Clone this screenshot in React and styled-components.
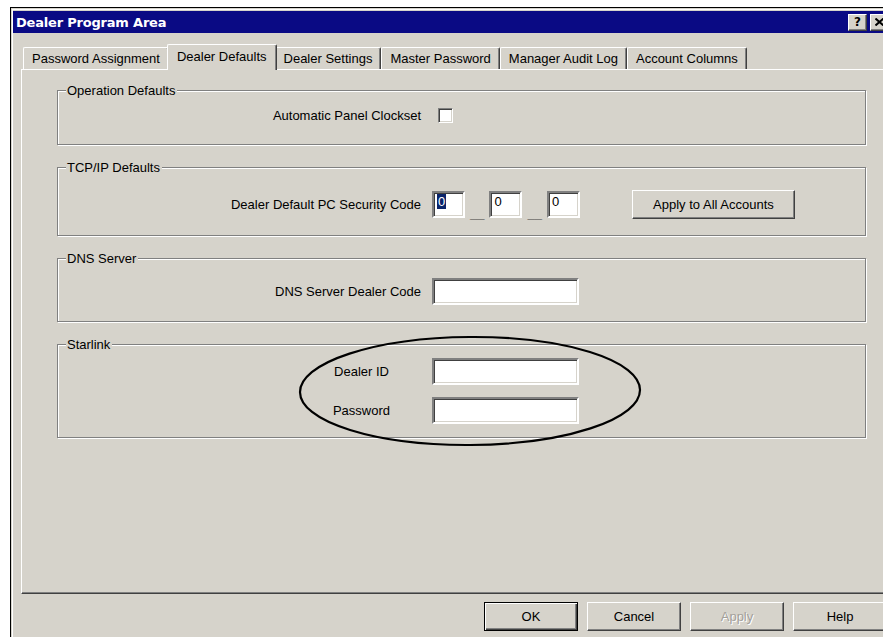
import React from "react";
import styled, { createGlobalStyle } from "styled-components";

const face = "#d6d3cb";

const GlobalStyle = createGlobalStyle`
  * { box-sizing: border-box; }
  html, body {
    margin: 0;
    padding: 0;
    background: #fff;
    overflow: hidden;
  }
  body {
    font-family: "Liberation Sans", Arial, sans-serif;
    font-size: 13px;
    color: #000;
  }
`;

const Window = styled.div`
  margin: 7px 0 0 10px;
  width: 890px;
  height: 640px;
  padding: 3px 0 0 2px;
  background: ${face};
  border-top: 1px solid #000;
  border-left: 1px solid #000;
  box-shadow: inset 1px 1px 0 ${face}, inset 2px 2px 0 #fff;
`;

const TitleBar = styled.div`
  display: flex;
  align-items: center;
  justify-content: space-between;
  height: 22px;
  margin-right: 7px;
  padding: 0 4px 0 3px;
  background: #0a0a84;
  color: #fff;
`;

const Title = styled.span`
  font-family: "DejaVu Sans", Verdana, sans-serif;
  font-weight: bold;
  font-size: 13px;
  letter-spacing: -0.2px;
`;

const CaptionButtons = styled.div`
  display: flex;
  gap: 3px;
`;

const CaptionButton = styled.div`
  display: flex;
  align-items: center;
  justify-content: center;
  width: 19px;
  height: 17px;
  background: ${face};
  color: #000;
  font-family: "DejaVu Sans", Verdana, sans-serif;
  font-weight: bold;
  font-size: 12px;
  border: 1px solid;
  border-color: #fff #404040 #404040 #fff;
  box-shadow: inset -1px -1px 0 #808080;
`;

const Body = styled.div`
  padding: 11px 5px 0 8px;
`;

const TabStrip = styled.div`
  display: flex;
  align-items: flex-end;
  height: 25px;
  padding-left: 2px;
  position: relative;
  z-index: 1;
`;

const Tab = styled.div`
  display: flex;
  align-items: center;
  height: ${(p) => (p.$active ? 26 : 22)}px;
  margin: ${(p) => (p.$active ? "0 -2px -1px" : "0")};
  padding: ${(p) => (p.$active ? "0 9px 3px 9px" : "0 8px 0 8px")};
  position: relative;
  z-index: ${(p) => (p.$active ? 2 : 1)};
  background: ${face};
  white-space: nowrap;
  border-top: 1px solid #fff;
  border-left: 1px solid #fff;
  border-right: 1px solid #404040;
  border-radius: 2px 2px 0 0;
  box-shadow: inset -1px 0 0 #808080;
`;

const Panel = styled.div`
  height: 525px;
  padding: 20px 28px 0 35px;
  border: 1px solid;
  border-color: #fff #404040 #404040 #fff;
  box-shadow: inset -1px -1px 0 #808080;
`;

const Groups = styled.div`
  display: flex;
  flex-direction: column;
  gap: 22px;
`;

const Group = styled.section`
  position: relative;
  height: ${(p) => p.$h}px;
  border: 1px solid #808080;
  box-shadow: 1px 1px 0 #fff, inset 1px 1px 0 #fff;
`;

const GroupTitle = styled.div`
  width: fit-content;
  margin: -8px 0 0 8px;
  padding: 0 2px 0 1px;
  line-height: 15px;
  background: ${face};
`;

const GroupBody = styled.div`
  display: flex;
  flex-direction: column;
  gap: ${(p) => p.$gap || 0}px;
  padding-top: ${(p) => p.$pt}px;
`;

const Row = styled.div`
  display: flex;
  align-items: center;
`;

const Label = styled.span`
  flex: none;
  width: 363px;
  text-align: right;
  white-space: nowrap;
`;

const CenterLabel = styled(Label)`
  padding-left: 244px;
  text-align: center;
`;

const Fields = styled.div`
  display: flex;
  align-items: center;
  margin-left: ${(p) => p.$ml ?? 11}px;
`;

const CheckBox = styled.div`
  width: 15px;
  height: 15px;
  background: #fff;
  border: 1px solid;
  border-color: #808080 #fff #fff #808080;
  box-shadow: inset 1px 1px 0 #404040, inset -1px -1px 0 ${face};
`;

const TextBox = styled.div`
  width: ${(p) => p.$w}px;
  height: 27px;
  padding: 1px 2px 0 3px;
  line-height: 15px;
  background: #fff;
  border: 2px solid;
  border-color: #808080 #fff #fff #808080;
  box-shadow: inset 1px 1px 0 #404040, inset -1px -1px 0 ${face};
`;

const Selected = styled.span`
  background: #0a246a;
  color: #fff;
  padding: 0 1px;
`;

const Sep = styled.span`
  align-self: flex-end;
  margin: 0 5px -2px;
  line-height: 15px;
  font-weight: bold;
  color: #3a3a3a;
`;

const Button = styled.div`
  display: flex;
  align-items: center;
  justify-content: center;
  flex: none;
  width: ${(p) => p.$w || 94}px;
  height: 29px;
  margin-left: ${(p) => p.$ml || 0}px;
  background: ${face};
  color: ${(p) => (p.$disabled ? "#a3a09a" : "#000")};
  text-shadow: ${(p) => (p.$disabled ? "1px 1px 0 #fff" : "none")};
  border: 1px solid;
  border-color: ${(p) =>
    p.$default ? "#000" : "#fff #404040 #404040 #fff"};
  box-shadow: ${(p) =>
    p.$default
      ? "inset 1px 1px 0 #fff, inset -1px -1px 0 #404040, inset -2px -2px 0 #808080"
      : "inset -1px -1px 0 #808080"};
`;

const ButtonRow = styled.div`
  display: flex;
  justify-content: flex-end;
  gap: 9px;
  margin-top: 8px;
  padding-right: 8px;
`;

const Circle = styled.svg`
  position: absolute;
  left: 239px;
  top: -13px;
  pointer-events: none;
`;

const tabs = [
  "Password Assignment",
  "Dealer Defaults",
  "Dealer Settings",
  "Master Password",
  "Manager Audit Log",
  "Account Columns",
];

export default function App() {
  return (
    <>
      <GlobalStyle />
      <Window>
        <TitleBar>
          <Title>Dealer Program Area</Title>
          <CaptionButtons>
            <CaptionButton>?</CaptionButton>
            <CaptionButton>
              <svg width="9" height="8" viewBox="0 0 9 8">
                <path
                  d="M0.5 0.5 L8.5 7.5 M8.5 0.5 L0.5 7.5"
                  stroke="#000"
                  strokeWidth="2"
                />
              </svg>
            </CaptionButton>
          </CaptionButtons>
        </TitleBar>

        <Body>
          <TabStrip>
            {tabs.map((t) => (
              <Tab key={t} $active={t === "Dealer Defaults"}>
                {t}
              </Tab>
            ))}
          </TabStrip>

          <Panel>
            <Groups>
              <Group $h={55}>
                <GroupTitle>Operation Defaults</GroupTitle>
                <GroupBody $pt={10}>
                  <Row>
                    <Label>Automatic Panel Clockset</Label>
                    <Fields $ml={17}>
                      <CheckBox />
                    </Fields>
                  </Row>
                </GroupBody>
              </Group>

              <Group $h={69}>
                <GroupTitle>TCP/IP Defaults</GroupTitle>
                <GroupBody $pt={15}>
                  <Row>
                    <Label>Dealer Default PC Security Code</Label>
                    <Fields>
                      <TextBox $w={33}>
                        <Selected>0</Selected>
                      </TextBox>
                      <Sep>__</Sep>
                      <TextBox $w={33}>0</TextBox>
                      <Sep>__</Sep>
                      <TextBox $w={33}>0</TextBox>
                      <Button $w={163} $ml={52}>
                        Apply to All Accounts
                      </Button>
                    </Fields>
                  </Row>
                </GroupBody>
              </Group>

              <Group $h={64}>
                <GroupTitle>DNS Server</GroupTitle>
                <GroupBody $pt={12}>
                  <Row>
                    <Label>DNS Server Dealer Code</Label>
                    <Fields>
                      <TextBox $w={147} />
                    </Fields>
                  </Row>
                </GroupBody>
              </Group>

              <Group $h={94}>
                <GroupTitle>Starlink</GroupTitle>
                <GroupBody $pt={6} $gap={12}>
                  <Row>
                    <CenterLabel>Dealer ID</CenterLabel>
                    <Fields>
                      <TextBox $w={147} />
                    </Fields>
                  </Row>
                  <Row>
                    <CenterLabel>Password</CenterLabel>
                    <Fields>
                      <TextBox $w={147} />
                    </Fields>
                  </Row>
                </GroupBody>
                <Circle width="346" height="118" viewBox="0 0 346 118">
                  <ellipse
                    cx="173"
                    cy="59"
                    rx="170"
                    ry="54"
                    fill="none"
                    stroke="#000"
                    strokeWidth="2.2"
                    transform="rotate(-0.4 173 59)"
                  />
                </Circle>
              </Group>
            </Groups>
          </Panel>

          <ButtonRow>
            <Button $default>OK</Button>
            <Button>Cancel</Button>
            <Button $disabled>Apply</Button>
            <Button>Help</Button>
          </ButtonRow>
        </Body>
      </Window>
    </>
  );
}
